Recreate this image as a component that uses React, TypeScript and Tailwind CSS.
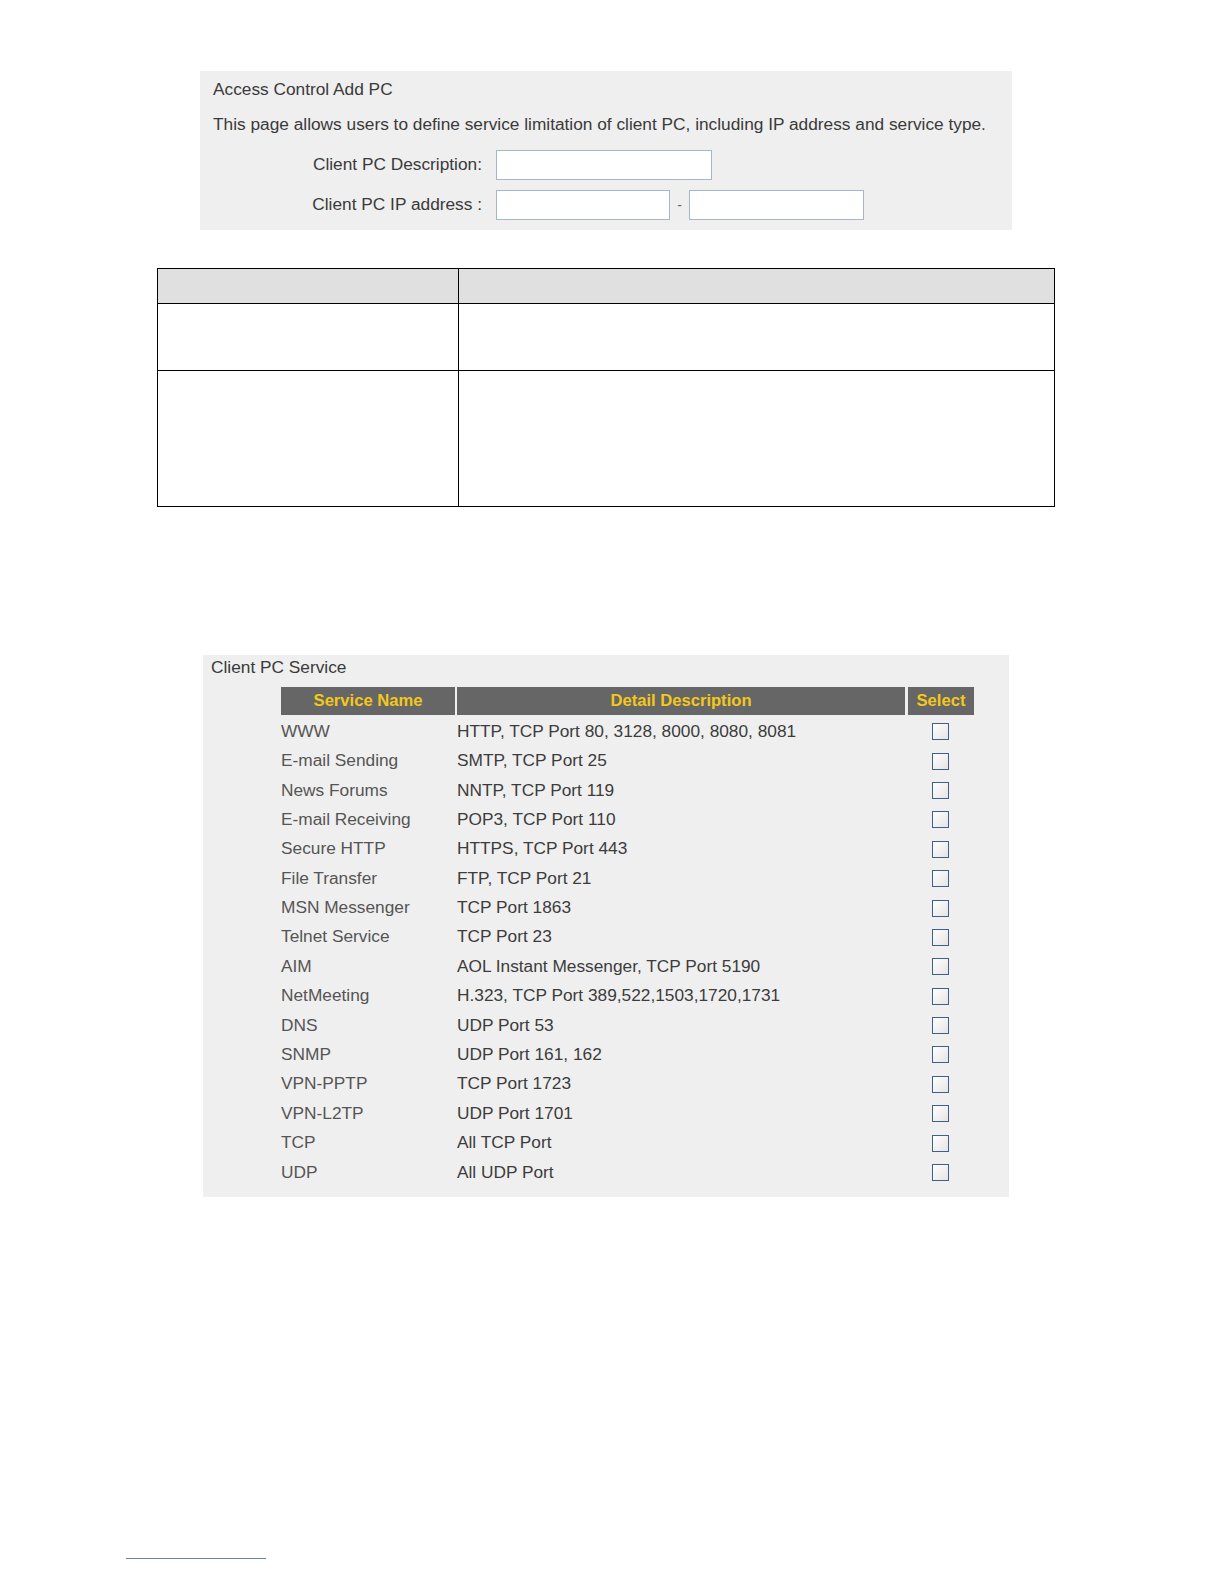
import React from "react";

const services: [string, string][] = [
  ["WWW", "HTTP, TCP Port 80, 3128, 8000, 8080, 8081"],
  ["E-mail Sending", "SMTP, TCP Port 25"],
  ["News Forums", "NNTP, TCP Port 119"],
  ["E-mail Receiving", "POP3, TCP Port 110"],
  ["Secure HTTP", "HTTPS, TCP Port 443"],
  ["File Transfer", "FTP, TCP Port 21"],
  ["MSN Messenger", "TCP Port 1863"],
  ["Telnet Service", "TCP Port 23"],
  ["AIM", "AOL Instant Messenger, TCP Port 5190"],
  ["NetMeeting", "H.323, TCP Port 389,522,1503,1720,1731"],
  ["DNS", "UDP Port 53"],
  ["SNMP", "UDP Port 161, 162"],
  ["VPN-PPTP", "TCP Port 1723"],
  ["VPN-L2TP", "UDP Port 1701"],
  ["TCP", "All TCP Port"],
  ["UDP", "All UDP Port"],
];

function Checkbox() {
  return (
    <div className="w-[17px] h-[17px] border border-[#3f6189] bg-gradient-to-br from-white to-[#e4e4e4]" />
  );
}

export default function App() {
  return (
    <div
      className="w-[1224px] h-[1584px] bg-white relative"
      style={{ fontFamily: '"Liberation Sans", Arial, sans-serif' }}
    >
      <div className="flex flex-col pt-[71px]">
        {/* Panel 1 */}
        <div className="ml-[200px] w-[812px] h-[159px] bg-[#efefef] text-[#3a3a3a] text-[17.3px] pt-[8px]">
          <div className="pl-[13px] leading-[20px]">Access Control Add PC</div>
          <div className="pl-[13px] leading-[20px] mt-[15px]">
            This page allows users to define service limitation of client PC, including IP address and service type.
          </div>
          <div className="flex items-center mt-[16px] h-[30px]">
            <div className="w-[282px] text-right">Client PC Description:</div>
            <div className="ml-[14px] w-[216px] h-[30px] bg-white border border-[#a6b6cb]" />
          </div>
          <div className="flex items-center mt-[10px] h-[30px]">
            <div className="w-[282px] text-right">Client PC IP address :</div>
            <div className="ml-[14px] w-[174px] h-[30px] bg-white border border-[#a6b6cb]" />
            <div className="w-[19px] text-center text-[14px] text-[#666]">-</div>
            <div className="w-[175px] h-[30px] bg-white border border-[#a6b6cb]" />
          </div>
        </div>

        {/* Empty table */}
        <div className="ml-[157px] mt-[38px] w-[898px] border border-black">
          <div className="grid grid-cols-[301px_1fr] h-[35px] bg-[#e0e0e0] border-b border-black">
            <div className="border-r border-black" />
            <div />
          </div>
          <div className="grid grid-cols-[301px_1fr] h-[67px] border-b border-black">
            <div className="border-r border-black" />
            <div />
          </div>
          <div className="grid grid-cols-[301px_1fr] h-[135px]">
            <div className="border-r border-black" />
            <div />
          </div>
        </div>

        {/* Panel 2 */}
        <div className="ml-[203px] mt-[148px] w-[806px] h-[542px] bg-[#efefef] pt-[2px]">
          <div className="pl-[8px] text-[17.3px] leading-[20px] text-[#3a3a3a]">Client PC Service</div>
          <div className="ml-[78px] mt-[10px] grid grid-cols-[174px_448px_67px] gap-x-[2px]">
            <div className="h-[28px] bg-[#666666] text-[#f3c81a] font-bold text-[16.6px] flex items-center justify-center">
              Service Name
            </div>
            <div className="h-[28px] bg-[#666666] text-[#f3c81a] font-bold text-[16.6px] flex items-center justify-center">
              Detail Description
            </div>
            <div className="h-[28px] bg-[#666666] text-[#f3c81a] font-bold text-[16.6px] flex items-center justify-center ml-[1px]">
              Select
            </div>
          </div>
          <div className="ml-[78px] mt-[2px] flex flex-col">
            {services.map(([name, desc]) => (
              <div key={name} className="grid grid-cols-[176px_450px_67px] h-[29.4px] items-center text-[17.3px]">
                <div className="text-[#555555]">{name}</div>
                <div className="text-[#3c3c3c]">{desc}</div>
                <div className="flex justify-center pr-[1px]">
                  <Checkbox />
                </div>
              </div>
            ))}
          </div>
        </div>
      </div>
      <div className="absolute left-[126px] top-[1558px] w-[140px] h-px bg-[#6d7fb3]" />
    </div>
  );
}
